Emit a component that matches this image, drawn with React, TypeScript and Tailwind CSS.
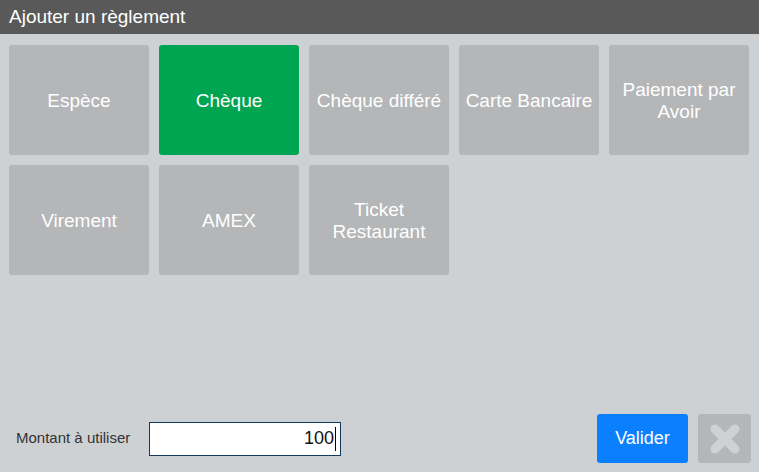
const methods = [
  "Espèce",
  "Chèque",
  "Chèque différé",
  "Carte Bancaire",
  "Paiement par Avoir",
  "Virement",
  "AMEX",
  "Ticket Restaurant",
];

export default function App() {
  const selected = "Chèque";

  return (
    <div className="w-[759px] h-[472px] flex flex-col bg-[#ced1d4] font-['Liberation_Sans',Arial,sans-serif] overflow-hidden">
      {/* Title bar */}
      <div className="h-[34px] shrink-0 flex items-center px-[9px] bg-[#595959] text-white text-[19px]">
        Ajouter un règlement
      </div>

      {/* Payment methods */}
      <div className="grid grid-cols-[repeat(5,140px)] auto-rows-[110px] gap-[10px] px-[9px] pt-[11px]">
        {methods.map((m) => (
          <button
            key={m}
            className={`rounded-[3px] px-[6px] pt-[2px] flex items-center justify-center text-center text-white text-[19px] leading-[22px] ${
              m === selected ? "bg-[#00a551]" : "bg-[#b5b6b8]"
            }`}
          >
            {m}
          </button>
        ))}
      </div>

      <div className="flex-1" />

      {/* Bottom bar */}
      <div className="flex items-center pl-[16px] pr-[8px] pb-[9px]">
        <div className="w-[133px] text-[15px] text-[#333333]">Montant à utiliser</div>
        <div className="w-[192px] h-[34px] bg-white border border-[#163a5c] flex items-center justify-end pr-[4px] text-[18px] text-[#111]">
          100
          <span className="w-px h-[24px] bg-black ml-px" />
        </div>
        <div className="flex-1" />
        <button className="w-[91px] h-[49px] rounded-[3px] bg-[#0a80ff] text-white text-[18px]">
          Valider
        </button>
        <button className="ml-[10px] w-[53px] h-[49px] rounded-[3px] bg-[#b5b6b8] flex items-center justify-center">
          <svg width="32" height="32" viewBox="0 0 32 32">
            <path
              d="M6 6 L26 26 M26 6 L6 26"
              stroke="#d0d1d3"
              strokeWidth="9"
              strokeLinecap="round"
              fill="none"
            />
          </svg>
        </button>
      </div>
    </div>
  );
}
